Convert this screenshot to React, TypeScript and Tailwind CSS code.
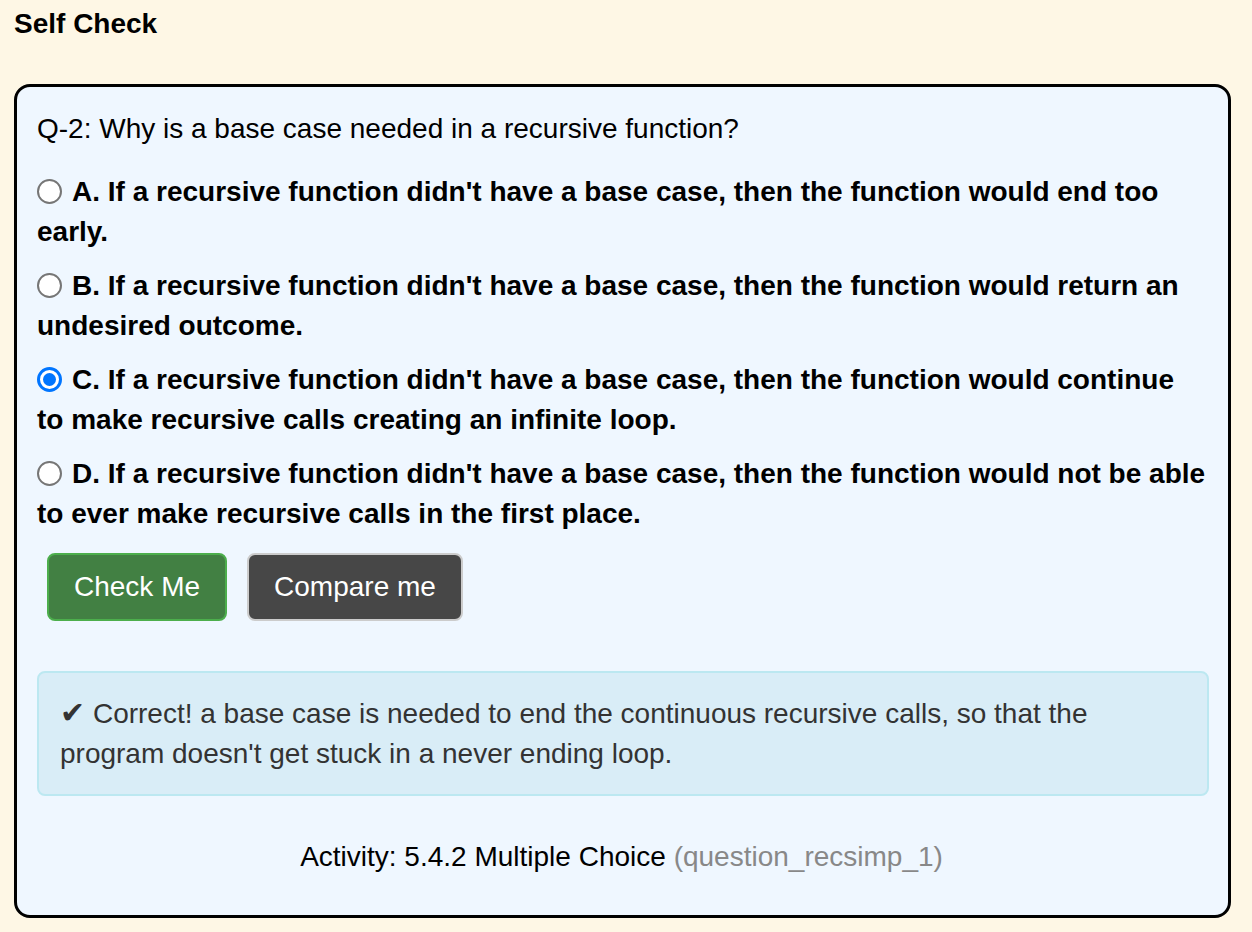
const OPTIONS = [
  { key: 'A', text: "If a recursive function didn't have a base case, then the function would end too early." },
  { key: 'B', text: "If a recursive function didn't have a base case, then the function would return an undesired outcome." },
  { key: 'C', text: "If a recursive function didn't have a base case, then the function would continue to make recursive calls creating an infinite loop." },
  { key: 'D', text: "If a recursive function didn't have a base case, then the function would not be able to ever make recursive calls in the first place." },
];

function Radio({ checked }: { checked: boolean }) {
  return checked ? (
    <span className="inline-block align-[-3px] w-[25px] h-[25px] rounded-full border-[3px] border-[#0075ff] bg-white p-[3px] mr-[10px]">
      <span className="block w-full h-full rounded-full bg-[#0075ff]" />
    </span>
  ) : (
    <span className="inline-block align-[-3px] w-[25px] h-[25px] rounded-full border-2 border-[#767676] bg-white mr-[10px]" />
  );
}

export default function App() {
  const selected = 'C';
  return (
    <div className="min-h-screen bg-[#fef7e5] pl-[14px] pr-[21px] pb-[15px] text-[28px] leading-[40px] text-black font-['Liberation_Sans',Arial,sans-serif]">
      <h2 className="pt-[4px] font-bold">Self Check</h2>

      <div className="mt-[40px] rounded-[16px] border-[3px] border-black bg-[#eff7ff] pl-[20px] pr-[22px] pt-[22px] pb-[38px]">
        <p>Q-2: Why is a base case needed in a recursive function?</p>

        <div className="mt-[23px] flex flex-col gap-[14px]">
          {OPTIONS.map((o) => (
            <label key={o.key} className="block font-bold">
              <Radio checked={o.key === selected} />
              {o.key}. {o.text}
            </label>
          ))}
        </div>

        <div className="mt-[19px] ml-[10px] flex gap-[20px]">
          <button className="h-[68px] rounded-[8px] border-2 border-[#4cae4c] bg-[#428043] px-[25px] text-white">
            Check Me
          </button>
          <button className="h-[68px] rounded-[8px] border-2 border-[#cccccc] bg-[#474747] px-[25px] text-white">
            Compare me
          </button>
        </div>

        <div className="mt-[50px] mr-[-3px] rounded-[8px] border-2 border-[#bce8f1] bg-[#d9edf7] px-[21px] py-[20px] text-[#333333]">
          <span className="text-[30px] font-['DejaVu_Sans',sans-serif]">✔</span> Correct! a base case is needed to end the continuous recursive calls, so that the program doesn't get stuck in a never ending loop.
        </div>

        <p className="mt-[41px] text-center">
          Activity: 5.4.2 Multiple Choice <span className="text-[#888888]">(question_recsimp_1)</span>
        </p>
      </div>
    </div>
  );
}
